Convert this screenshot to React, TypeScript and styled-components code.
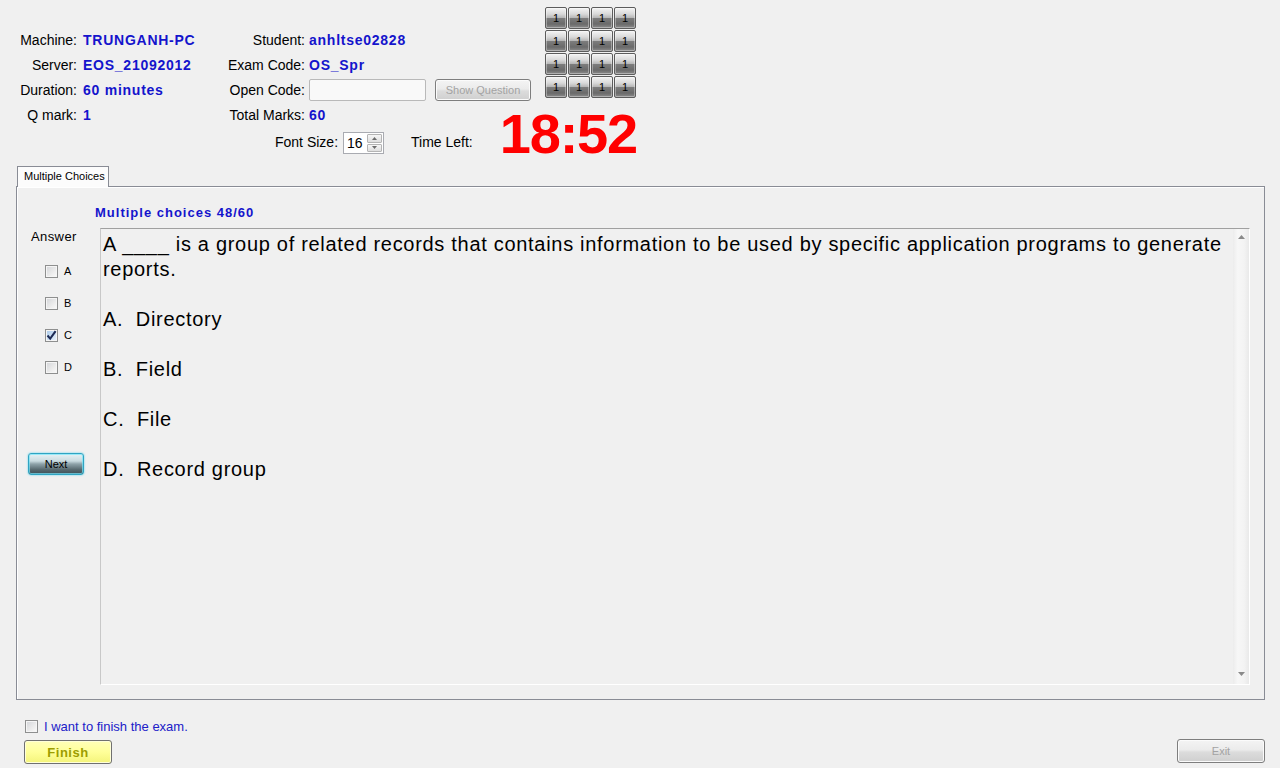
import React from "react";
import styled, { createGlobalStyle } from "styled-components";

const GlobalStyle = createGlobalStyle`
  html, body { margin: 0; padding: 0; background: #f0f0f0; }
  body { font-family: "Liberation Sans", Arial, sans-serif; }
  * { box-sizing: border-box; }
`;

const Screen = styled.div`
  width: 1280px;
  height: 768px;
  background: #f0f0f0;
  overflow: hidden;
  display: flex;
  flex-direction: column;
  color: #000;
  font-family: "Liberation Sans", Arial, sans-serif;
`;

/* ---------- header ---------- */
const Header = styled.div`
  display: flex;
  height: 166px;
  flex-shrink: 0;
`;

const InfoColumn = styled.div<{ $width: number }>`
  width: ${(p) => p.$width}px;
  padding-top: 27px;
  display: flex;
  flex-direction: column;
`;

const InfoGrid = styled.div<{ $labelWidth: number; $gap: number }>`
  display: grid;
  grid-template-columns: ${(p) => p.$labelWidth}px auto;
  column-gap: ${(p) => p.$gap}px;
  grid-auto-rows: 25px;
  align-items: center;
`;

const Label = styled.span`
  font-size: 14px;
  text-align: right;
  white-space: nowrap;
  color: #000;
`;

const Value = styled.span`
  font-size: 14px;
  font-weight: bold;
  color: #1414cc;
  letter-spacing: 0.75px;
  white-space: nowrap;
`;

const InlineGroup = styled.div`
  display: flex;
  align-items: center;
  gap: 9px;
`;

const TextInput = styled.div`
  width: 117px;
  height: 22px;
  background: #f9f9f9;
  border: 1px solid #b9b9b9;
  border-radius: 2px;
`;

const DisabledButton = styled.div<{ $width: number; $height: number }>`
  width: ${(p) => p.$width}px;
  height: ${(p) => p.$height}px;
  border: 1px solid #7e7e7e;
  border-radius: 3px;
  background: linear-gradient(to bottom, #f4f4f4 0%, #ebebeb 45%, #dcdcdc 55%, #cfcfcf 100%);
  box-shadow: inset 0 0 0 1px #fbfbfb;
  color: #a3a3a3;
  font-size: 11px;
  display: flex;
  align-items: center;
  justify-content: center;
  white-space: nowrap;
`;

const FontRow = styled.div`
  display: flex;
  align-items: center;
  height: 30px;
  padding-left: 75px;
`;

const RowLabel = styled.span<{ $gapAfter: number }>`
  font-size: 14px;
  white-space: nowrap;
  margin-right: ${(p) => p.$gapAfter}px;
`;

const Spinner = styled.div`
  width: 41px;
  height: 22px;
  margin-top: 2px;
  background: #fff;
  border: 1px solid #a9abb1;
  display: flex;
  align-items: stretch;
  margin-right: 27px;
`;

const SpinnerValue = styled.span`
  flex: 1;
  font-size: 14px;
  padding-left: 3px;
  display: flex;
  align-items: center;
`;

const SpinnerArrows = styled.div`
  width: 16px;
  display: flex;
  flex-direction: column;
  gap: 1px;
  padding: 1px 1px 1px 0;
`;

const SpinnerArrow = styled.div`
  flex: 1;
  border: 1px solid #b4b4b4;
  border-radius: 1px;
  background: linear-gradient(to bottom, #f6f6f6, #dedede);
  display: flex;
  align-items: center;
  justify-content: center;
`;

const ButtonColumn = styled.div`
  width: 92px;
  padding-top: 7px;
  display: flex;
  flex-direction: column;
`;

const QuestionGrid = styled.div`
  display: grid;
  grid-template-columns: repeat(4, 22px);
  grid-auto-rows: 22px;
  gap: 1px;
`;

const GridButton = styled.div`
  border: 1px solid #5c5c5c;
  border-radius: 2px;
  background: linear-gradient(
    to bottom,
    #f4f4f4 0%,
    #d9d9d9 30%,
    #b8b8b8 48%,
    #7c7c7c 52%,
    #6a6a6a 80%,
    #8c8c8c 100%
  );
  box-shadow: inset 0 0 0 1px rgba(255, 255, 255, 0.35);
  font-size: 11px;
  color: #000;
  display: flex;
  align-items: center;
  justify-content: center;
`;

const Timer = styled.div`
  display: flex;
  justify-content: flex-end;
  margin-top: 8px;
  font-size: 56px;
  line-height: 1;
  font-weight: bold;
  letter-spacing: -1.2px;
  color: #ff0000;
  white-space: nowrap;
`;

/* ---------- tab control ---------- */
const TabArea = styled.div`
  margin-left: 16px;
  width: 1249px;
  display: flex;
  flex-direction: column;
  flex-shrink: 0;
`;

const TabStrip = styled.div`
  display: flex;
  height: 20px;
  padding-left: 1px;
  position: relative;
  z-index: 1;
`;

const Tab = styled.div`
  width: 92px;
  height: 21px;
  border: 1px solid #898c95;
  border-bottom: none;
  background: #fcfcfc;
  font-size: 11px;
  padding: 3px 0 0 6px;
  white-space: nowrap;
`;

const Panel = styled.div`
  height: 514px;
  border: 1px solid #898c95;
  box-shadow: inset 1px 1px 0 #ffffff;
  padding: 18px 13px 14px 0;
  display: flex;
  flex-direction: column;
`;

const SectionTitle = styled.div`
  height: 16px;
  line-height: 16px;
  padding-left: 78px;
  font-size: 13px;
  font-weight: bold;
  letter-spacing: 1px;
  color: #1414cc;
  margin-bottom: 7px;
`;

const PanelBody = styled.div`
  display: flex;
  height: 457px;
`;

const AnswerColumn = styled.div`
  width: 83px;
  padding: 1px 0 0 14px;
  display: flex;
  flex-direction: column;
`;

const AnswerHeading = styled.div`
  font-size: 13px;
  line-height: 16px;
  letter-spacing: 0.4px;
  margin-bottom: 18px;
`;

const AnswerList = styled.div`
  display: flex;
  flex-direction: column;
  gap: 16px;
  padding-left: 14px;
`;

const ChoiceRow = styled.label`
  display: flex;
  align-items: center;
  height: 16px;
  gap: 6px;
  font-size: 11px;
`;

const CheckBox = styled.span<{ $checked?: boolean }>`
  width: 13px;
  height: 13px;
  flex-shrink: 0;
  border: 1px solid #8e8f8f;
  background: ${(p) =>
    p.$checked
      ? "linear-gradient(135deg, #a9c9ea 0%, #d6e6f6 70%, #eef5fc 100%)"
      : "linear-gradient(135deg, #d2d4d8 0%, #ececec 60%, #fbfbfb 100%)"};
  box-shadow: inset 0 0 0 1px #f5f5f5;
  display: flex;
  align-items: center;
  justify-content: center;
`;

const NextButton = styled.div`
  margin: 78px 0 0 -3px;
  width: 56px;
  height: 22px;
  border: 1px solid #2fa4c2;
  border-radius: 3px;
  background: linear-gradient(
    to bottom,
    #e6f2f5 0%,
    #cadbe0 35%,
    #8ea2a9 50%,
    #57696f 78%,
    #3e5057 100%
  );
  box-shadow: 0 0 2px #4fd2ee, inset 0 0 0 1px rgba(120, 230, 250, 0.7);
  font-size: 11px;
  color: #000;
  display: flex;
  align-items: center;
  justify-content: center;
`;

const QuestionBox = styled.div`
  width: 1150px;
  height: 457px;
  border-top: 1px solid #a0a0a0;
  border-left: 1px solid #c8c8c8;
  border-bottom: 1px solid #ffffff;
  border-right: 1px solid #ffffff;
  display: flex;
`;

const QuestionText = styled.div`
  flex: 1;
  padding: 3px 6px 0 2px;
  font-size: 20px;
  line-height: 25px;
  letter-spacing: 0.7px;
  color: #000;
`;

const Paragraph = styled.p`
  margin: 0 0 25px 0;
  white-space: pre-wrap;
`;

const ScrollBar = styled.div`
  width: 16px;
  display: flex;
  flex-direction: column;
  justify-content: space-between;
  align-items: center;
  padding: 6px 0 8px 0;
  background: linear-gradient(to right, #ececec 0%, #f7f7f7 30%, #f3f3f3 70%, #e9e9e9 100%);
`;

/* ---------- footer ---------- */
const Footer = styled.div`
  display: flex;
  flex-direction: column;
  padding: 20px 15px 0 24px;
`;

const FinishRow = styled.label`
  display: flex;
  align-items: center;
  gap: 6px;
  height: 13px;
  margin-left: 1px;
  font-size: 13px;
  color: #2020c8;
`;

const ButtonRow = styled.div`
  display: flex;
  justify-content: space-between;
  align-items: flex-start;
  margin-top: 6px;
`;

const FinishButton = styled.div`
  margin-top: 1px;
  width: 88px;
  height: 24px;
  border: 1px solid #707070;
  border-radius: 3px;
  background: linear-gradient(to bottom, #ffffb8 0%, #ffff99 50%, #f4f47a 100%);
  box-shadow: inset 0 0 0 1px #ffffd8;
  font-size: 13px;
  font-weight: bold;
  letter-spacing: 0.5px;
  color: #9d9d00;
  display: flex;
  align-items: center;
  justify-content: center;
`;

const Tri = ({ down }: { down?: boolean }) => (
  <svg width="7" height="4" viewBox="0 0 7 4">
    <path d={down ? "M0 0 L7 0 L3.5 4 Z" : "M0 4 L7 4 L3.5 0 Z"} fill="#8a8a8a" />
  </svg>
);

const SmallTri = ({ down }: { down?: boolean }) => (
  <svg width="5" height="3" viewBox="0 0 5 3">
    <path d={down ? "M0 0 L5 0 L2.5 3 Z" : "M0 3 L5 3 L2.5 0 Z"} fill="#6b6b6b" />
  </svg>
);

const Check = () => (
  <svg width="11" height="11" viewBox="0 0 11 11">
    <path d="M1.5 5.5 L4.2 8.6 L9.6 1.2" stroke="#1c2a55" strokeWidth="2" fill="none" />
  </svg>
);

const choices = [
  { key: "A", checked: false },
  { key: "B", checked: false },
  { key: "C", checked: true },
  { key: "D", checked: false },
];

const options = ["A.  Directory", "B.  Field", "C.  File", "D.  Record group"];

export default function App() {
  return (
    <Screen>
      <GlobalStyle />
      <Header>
        <InfoColumn $width={200}>
          <InfoGrid $labelWidth={77} $gap={6}>
            <Label>Machine:</Label>
            <Value>TRUNGANH-PC</Value>
            <Label>Server:</Label>
            <Value>EOS_21092012</Value>
            <Label>Duration:</Label>
            <Value>60 minutes</Value>
            <Label>Q mark:</Label>
            <Value>1</Value>
          </InfoGrid>
        </InfoColumn>
        <InfoColumn $width={345}>
          <InfoGrid $labelWidth={105} $gap={4}>
            <Label>Student:</Label>
            <Value>anhltse02828</Value>
            <Label>Exam Code:</Label>
            <Value>OS_Spr</Value>
            <Label>Open Code:</Label>
            <InlineGroup>
              <TextInput />
              <DisabledButton $width={96} $height={22}>Show Question</DisabledButton>
            </InlineGroup>
            <Label>Total Marks:</Label>
            <Value>60</Value>
          </InfoGrid>
          <FontRow>
            <RowLabel $gapAfter={5}>Font Size:</RowLabel>
            <Spinner>
              <SpinnerValue>16</SpinnerValue>
              <SpinnerArrows>
                <SpinnerArrow>
                  <SmallTri />
                </SpinnerArrow>
                <SpinnerArrow>
                  <SmallTri down />
                </SpinnerArrow>
              </SpinnerArrows>
            </Spinner>
            <RowLabel $gapAfter={0}>Time Left:</RowLabel>
          </FontRow>
        </InfoColumn>
        <ButtonColumn>
          <QuestionGrid>
            {Array.from({ length: 16 }).map((_, i) => (
              <GridButton key={i}>1</GridButton>
            ))}
          </QuestionGrid>
          <Timer>18:52</Timer>
        </ButtonColumn>
      </Header>

      <TabArea>
        <TabStrip>
          <Tab>Multiple Choices</Tab>
        </TabStrip>
        <Panel>
          <SectionTitle>Multiple choices 48/60</SectionTitle>
          <PanelBody>
            <AnswerColumn>
              <AnswerHeading>Answer</AnswerHeading>
              <AnswerList>
                {choices.map((c) => (
                  <ChoiceRow key={c.key}>
                    <CheckBox $checked={c.checked}>{c.checked && <Check />}</CheckBox>
                    {c.key}
                  </ChoiceRow>
                ))}
              </AnswerList>
              <NextButton>Next</NextButton>
            </AnswerColumn>
            <QuestionBox>
              <QuestionText>
                <Paragraph>
                  A ____ is a group of related records that contains information to be used by
                  specific application programs to generate reports.
                </Paragraph>
                {options.map((o) => (
                  <Paragraph key={o}>{o}</Paragraph>
                ))}
              </QuestionText>
              <ScrollBar>
                <Tri />
                <Tri down />
              </ScrollBar>
            </QuestionBox>
          </PanelBody>
        </Panel>
      </TabArea>

      <Footer>
        <FinishRow>
          <CheckBox />I want to finish the exam.
        </FinishRow>
        <ButtonRow>
          <FinishButton>Finish</FinishButton>
          <DisabledButton $width={88} $height={24}>Exit</DisabledButton>
        </ButtonRow>
      </Footer>
    </Screen>
  );
}
